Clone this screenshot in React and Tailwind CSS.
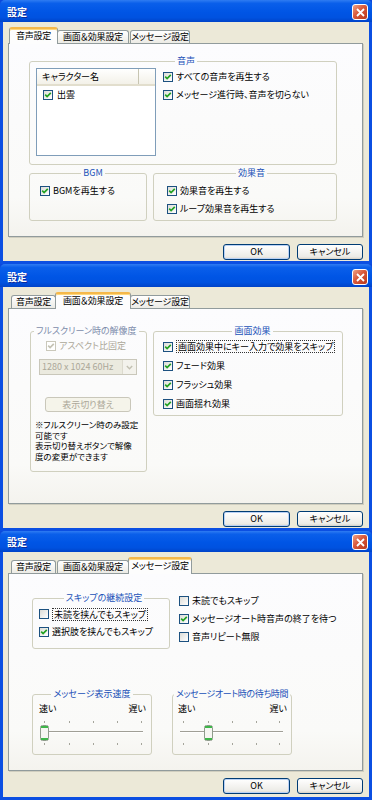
import React from "react";

// XP style checkbox
function CB({ checked, disabled }) {
  return (
    <span
      className={
        disabled
          ? "flex h-[10px] w-[10px] shrink-0 items-center justify-center border border-[#cac8bb] bg-white"
          : "flex h-[10px] w-[10px] shrink-0 items-center justify-center border border-[#1c5180] bg-[linear-gradient(135deg,#dcdcd7,#ffffff)]"
      }
    >
      {checked && (
        <svg width="8" height="8" viewBox="0 0 8 8">
          <path
            d="M1.2 3.7 L3.1 5.6 L6.8 1.9"
            fill="none"
            stroke={disabled ? "#c4c2b4" : "#21a121"}
            strokeWidth="1.7"
          />
        </svg>
      )}
    </span>
  );
}

function Check({ checked, disabled, focus, className, children }) {
  return (
    <div className={`flex items-center gap-[3px] ${className}`}>
      <CB checked={checked} disabled={disabled} />
      {focus ? (
        <span className="border border-dotted border-[#333] px-[1px] leading-[11px]">{children}</span>
      ) : (
        <span className={disabled ? "text-[#aca899]" : ""}>{children}</span>
      )}
    </div>
  );
}

function Group({ title, className, legendClass, children }) {
  return (
    <fieldset className={`rounded-[3px] border border-[#d0d0bf] ${className}`}>
      <legend className={`px-[2px] leading-[12px] ${legendClass || "mx-auto text-[#2151b8]"}`}>{title}</legend>
      {children}
    </fieldset>
  );
}

function Tabs({ active }) {
  const tabs = [
    { label: "音声設定", w: "w-[45px]", ws: "w-[49px]" },
    { label: "画面＆効果設定", w: "w-[72px]", ws: "w-[76px]" },
    { label: "メッセージ設定", w: "w-[60px]", ws: "w-[64px]" },
  ];
  return (
    <div className="mt-[5px] flex h-[16px] items-end gap-[1px] pl-[8px] tracking-[-0.2px]">
      {tabs.map((t, i) =>
        i === active ? (
          <div
            key={t.label}
            className={`relative z-10 -mx-[2px] -mb-[1px] flex h-[17px] items-center justify-center rounded-t-[3px] border-x border-t-2 border-x-[#919b9c] border-t-[#f5b84a] bg-[#fdfdfd] pb-[1px] shadow-[inset_0_1px_0_#ffd77a] ${t.ws}`}
          >
            {t.label}
          </div>
        ) : (
          <div
            key={t.label}
            className={`flex h-[13px] items-center justify-center rounded-t-[3px] border-x border-t border-[#919b9c] bg-[linear-gradient(#ffffff,#ecebe5)] ${t.w}`}
          >
            {t.label}
          </div>
        )
      )}
    </div>
  );
}

function Btn({ def, disabled, className, children }) {
  if (disabled)
    return (
      <div className={`flex items-center justify-center rounded-[3px] border border-[#c9c7ba] bg-[#f5f4ea] text-[#aca899] ${className}`}>
        {children}
      </div>
    );
  return (
    <div
      className={`flex items-center justify-center rounded-[3px] border border-[#003c74] bg-[linear-gradient(#ffffff,#ecebe6_85%,#d6d0c5)] ${
        def ? "shadow-[inset_0_0_0_1px_#b9d1f5]" : ""
      } ${className}`}
    >
      {children}
    </div>
  );
}

function CloseBtn() {
  return (
    <div className="mb-[2px] flex h-[16px] w-[16px] items-center justify-center rounded-[3px] border border-white bg-[linear-gradient(135deg,#f0a386,#d9583a_45%,#b8391c)]">
      <svg width="9" height="9" viewBox="0 0 9 9">
        <path d="M1 1 L8 8 M8 1 L1 8" stroke="#fff" strokeWidth="1.8" />
      </svg>
    </div>
  );
}

function Win({ hClass, tbClass, panelClass, active, children }) {
  return (
    <div className={`flex flex-col ${hClass}`}>
      <div
        className={`flex shrink-0 items-end justify-between rounded-t-[5px] bg-[linear-gradient(180deg,#2f7cf2_0%,#0a5fea_15%,#0055e5_55%,#0052e0_80%,#0043c8_100%)] pl-[7px] pr-[4px] ${tbClass}`}
      >
        <span className="mb-[4px] text-[10px] leading-[12px] font-bold text-white [text-shadow:1px_1px_0_#0a2a9c]">設定</span>
        <CloseBtn />
      </div>
      <div className="flex flex-1 flex-col border-x-[3px] border-b-[3px] border-[#0b4fe2] bg-[#ece9d8]">
        <Tabs active={active} />
        <div
          className={`ml-[5px] mr-[6px] border border-[#919b9c] bg-[linear-gradient(#fcfcfe,#fafaf8_80%,#f4f3ee)] shadow-[1px_1px_0_#d0cebf] ${panelClass}`}
        >
          {children}
        </div>
        <div className="mr-[6px] mt-[7px] flex justify-end gap-[7px]">
          <Btn def className="h-[16px] w-[67px]">OK</Btn>
          <Btn className="h-[16px] w-[66px]">キャンセル</Btn>
        </div>
      </div>
    </div>
  );
}

function ListView() {
  return (
    <div className="h-[88px] w-[120px] shrink-0 border border-[#7f9db9] bg-white">
      <div className="flex h-[17px] border-b-2 border-[#e2decd] bg-[linear-gradient(#ffffff,#f3f1e8)]">
        <div className="flex w-[102px] items-center border-r border-[#c7c5b2] pl-[5px]">キャラクター名</div>
      </div>
      <div className="flex h-[18px] items-center gap-[4px] pl-[6px]">
        <CB checked />
        <span>出雲</span>
      </div>
    </div>
  );
}

function Slider({ ticks, from, to, thumb }) {
  return (
    <svg width="118" height="28" className="mt-[4px] block">
      {ticks.map((x) => (
        <rect key={"t" + x} x={x} y="2" width="1" height="2" fill="#a5a59b" />
      ))}
      <line x1={from} y1="12.5" x2={to} y2="12.5" stroke="#a09f96" />
      <line x1={from} y1="13.5" x2={to} y2="13.5" stroke="#ffffff" />
      {ticks.map((x) => (
        <rect key={"b" + x} x={x} y="24" width="1" height="2" fill="#a5a59b" />
      ))}
      <rect x={thumb + 0.5} y="6.5" width="8" height="15" rx="2" fill="#f6f6f2" stroke="#8f9c8c" />
      <rect x={thumb + 1} y="7" width="7" height="2" fill="#3fb54a" />
      <rect x={thumb + 1} y="19" width="7" height="2" fill="#3fb54a" />
    </svg>
  );
}

export default function App() {
  return (
    <div className="h-[800px] w-[372px] overflow-hidden whitespace-nowrap bg-[#0b49dc] text-[9px] leading-[12px] text-black [font-family:'Noto_Sans_CJK_JP',sans-serif] [font-feature-settings:'palt']">
      {/* 音声設定 */}
      <Win hClass="h-[264px]" tbClass="h-[22px]" panelClass="h-[194px]" active={0}>
        <div className="pl-[20px] pt-[11px]">
          <Group title="音声" className="h-[110px] w-[308px] pl-[6px]">
            <div className="mt-[1px] flex gap-[7px]">
              <ListView />
              <div className="flex flex-col">
                <Check checked className="h-[18px]">すべての音声を再生する</Check>
                <Check checked className="h-[18px]">メッセージ進行時、音声を切らない</Check>
              </div>
            </div>
          </Group>
          <div className="mt-[2px] flex gap-[6px]">
            <Group title="BGM" className="h-[54px] w-[118px] pl-[10px] pt-[3px]">
              <Check checked className="h-[18px]">BGMを再生する</Check>
            </Group>
            <Group title="効果音" className="h-[54px] w-[184px] pl-[13px] pt-[3px]">
              <Check checked className="h-[18px]">効果音を再生する</Check>
              <Check checked className="h-[18px]">ループ効果音を再生する</Check>
            </Group>
          </div>
        </div>
      </Win>

      {/* 画面＆効果設定 */}
      <Win hClass="h-[267px]" tbClass="h-[23px]" panelClass="h-[196px]" active={1}>
        <div className="flex items-start gap-[6px] pl-[21px] pt-[16px]">
          <Group
            title="フルスクリーン時の解像度"
            legendClass="ml-[3px] text-[#7d8cab]"
            className="h-[147px] w-[117px]"
          >
            <Check checked disabled className="ml-[15px] h-[18px]">アスペクト比固定</Check>
            <div className="ml-[8px] mt-[4px] flex h-[16px] w-[98px] border border-[#c9c7ba] bg-[#ebeadf]">
              <div className="flex flex-1 items-center pl-[2px] text-[#aca899]">1280 x 1024 60Hz</div>
              <div className="flex w-[14px] items-center justify-center border-l border-[#dcdace] bg-[#f3f2ec]">
                <svg width="7" height="5" viewBox="0 0 7 5">
                  <path d="M0.8 1 L3.5 3.8 L6.2 1" fill="none" stroke="#c2c0b2" strokeWidth="1.4" />
                </svg>
              </div>
            </div>
            <Btn disabled className="ml-[14px] mt-[22px] h-[15px] w-[86px]">表示切り替え</Btn>
            <p className="ml-[4px] mt-[7px] text-[8.5px] leading-[10.5px]">
              ※フルスクリーン時のみ設定
              <br />
              可能です
              <br />
              表示切り替えボタンで解像
              <br />
              度の変更ができます
            </p>
          </Group>
          <Group title="画面効果" className="h-[91px] w-[190px] pl-[9px]">
            <Check checked focus className="h-[19px]">画面効果中にキー入力で効果をスキップ</Check>
            <Check checked className="h-[19px]">フェード効果</Check>
            <Check checked className="h-[19px]">フラッシュ効果</Check>
            <Check checked className="h-[19px]">画面揺れ効果</Check>
          </Group>
        </div>
      </Win>

      {/* メッセージ設定 */}
      <Win hClass="h-[269px]" tbClass="h-[21px]" panelClass="h-[198px]" active={2}>
        <div className="pl-[23px] pt-[18px]">
          <div className="flex items-start gap-[9px]">
            <Group title="スキップの継続設定" className="h-[57px] w-[138px] pl-[6px] pt-[1px]">
              <Check focus className="h-[18px]">未読を挟んでもスキップ</Check>
              <Check checked className="h-[18px]">選択肢を挟んでもスキップ</Check>
            </Group>
            <div className="flex flex-col">
              <Check className="h-[18px]">未読でもスキップ</Check>
              <Check checked className="h-[18px]">メッセージオート時音声の終了を待つ</Check>
              <Check className="h-[18px]">音声リピート無限</Check>
            </div>
          </div>
          <div className="mt-[39px] flex gap-[20px]">
            <Group title="メッセージ表示速度" className="h-[67px] w-[120px]">
              <div className="mt-[3px] flex justify-between pl-[6px] pr-[5px]">
                <span>速い</span>
                <span>遅い</span>
              </div>
              <Slider ticks={[11, 36, 60, 84, 108]} from={10} to={110} thumb={7} />
            </Group>
            <Group
              title="メッセージオート時の待ち時間"
              legendClass="mx-auto text-[#2151b8] tracking-[-0.4px]"
              className="h-[67px] w-[120px]"
            >
              <div className="mt-[3px] flex justify-between pl-[5px] pr-[4px]">
                <span>速い</span>
                <span>遅い</span>
              </div>
              <Slider ticks={[10, 35, 59, 83, 106]} from={7} to={110} thumb={31} />
            </Group>
          </div>
        </div>
      </Win>
    </div>
  );
}
